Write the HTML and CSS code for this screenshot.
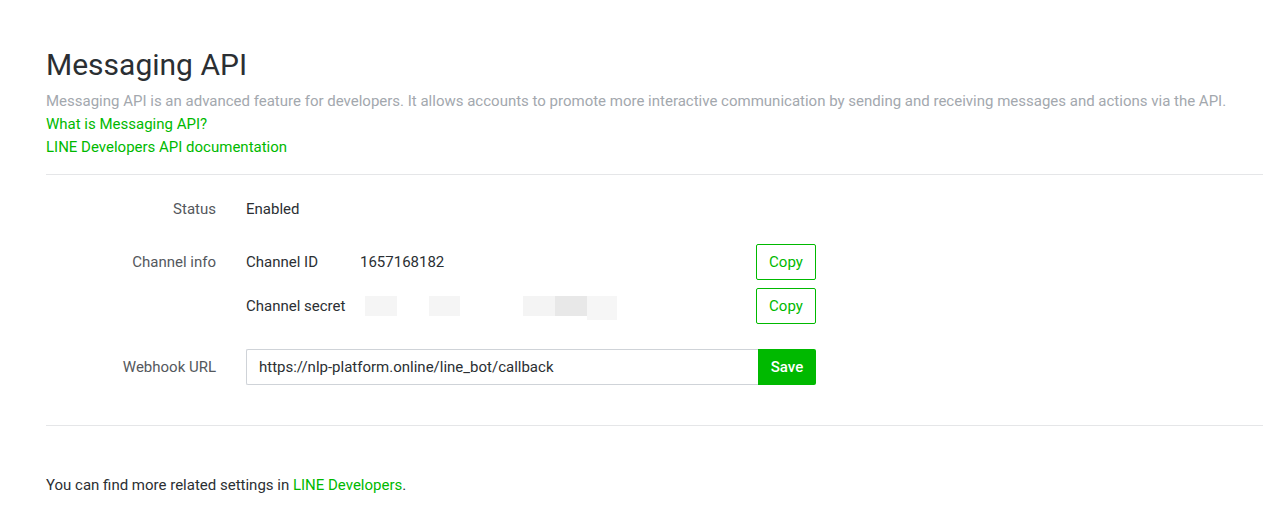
FILE: index.html
```html
<!DOCTYPE html>
<html lang="en">
<head>
<meta charset="utf-8">
<link rel="stylesheet" href="styles.css">
</head>
<body>
<main class="page">
  <section class="intro">
    <h1 class="title">Messaging API</h1>
    <p class="desc">Messaging API is an advanced feature for developers. It allows accounts to promote more interactive communication by sending and receiving messages and actions via the API.</p>
    <a class="link" href="#">What is Messaging API?</a>
    <a class="link" href="#">LINE Developers API documentation</a>
  </section>
  <section class="settings">
    <div class="row row-status">
      <div class="label">Status</div>
      <div class="value">Enabled</div>
    </div>
    <div class="row row-info">
      <div class="label">Channel info</div>
      <div class="value info">
        <div class="info-line">
          <span class="key">Channel ID</span>
          <span class="id">1657168182</span>
          <button class="btn-outline">Copy</button>
        </div>
        <div class="info-line">
          <span class="key">Channel secret</span>
          <span class="secret">
            <i class="blk b1"></i><i class="blk b2"></i><i class="blk b3"></i><i class="blk b4"></i><i class="blk b5"></i>
          </span>
          <button class="btn-outline">Copy</button>
        </div>
      </div>
    </div>
    <div class="row row-webhook">
      <div class="label">Webhook URL</div>
      <div class="value webhook">
        <input class="input" type="text" value="https://nlp-platform.online/line_bot/callback">
        <button class="btn-solid">Save</button>
      </div>
    </div>
  </section>
  <p class="footer">You can find more related settings in <a class="link-inline" href="#">LINE Developers</a>.</p>
</main>
</body>
</html>
```
FILE: styles.css
```css
* { box-sizing: border-box; }
html, body { margin: 0; padding: 0; background: #fff; }
body {
  font-family: Roboto, "Liberation Sans", Arial, sans-serif;
  font-size: 15px;
  color: #2b2f33;
}
.page { padding: 48px 0 0 46px; }
.intro { display: flex; flex-direction: column; padding-bottom: 15px; border-bottom: 1px solid #e5e6e8; }
.title {
  margin: 0;
  font-size: 30px;
  font-weight: 400;
  line-height: 34px;
  color: #2b2f33;
}
.desc {
  margin: 8px 0 0;
  color: #a3a8ae;
  line-height: 23px;
}
.link {
  color: #00b900;
  text-decoration: none;
  line-height: 23px;
  align-self: flex-start;
}
.settings {
  padding: 25px 0 40px;
  border-bottom: 1px solid #e5e6e8;
}
.row { display: flex; align-items: flex-start; }
.label {
  width: 170px;
  text-align: right;
  color: #54585d;
  flex: none;
}
.value { margin-left: 30px; color: #2b2f33; }
.row-status { height: 44px; }
.row-status .label, .row-status .value { line-height: 18px; }
.row-info .label { line-height: 36px; }
.info { display: flex; flex-direction: column; gap: 8px; }
.info-line { display: flex; align-items: center; height: 36px; }
.key { width: 114px; }
.id { width: 396px; }
.secret { width: 396px; display: flex; height: 20px; position: relative; }
.blk { display: block; height: 20px; position: absolute; top: 0; }
.b1 { left: 5px; width: 32px; background: #f5f5f5; }
.b2 { left: 69px; width: 31px; background: #f5f5f5; }
.b3 { left: 163px; width: 32px; background: #f4f4f4; }
.b4 { left: 195px; width: 32px; background: #e8e8e8; }
.b5 { left: 227px; width: 30px; height: 24px; background: #f6f6f6; }
.btn-outline {
  width: 60px;
  height: 36px;
  border: 1px solid #00b900;
  border-radius: 2px;
  background: #fff;
  color: #00b900;
  font: 400 15px Roboto, "Liberation Sans", Arial, sans-serif;
  padding: 0;
}
.row-webhook { margin-top: 25px; }
.row-webhook .label { line-height: 36px; }
.webhook { display: flex; }
.input {
  width: 512px;
  height: 36px;
  border: 1px solid #cfd3d8;
  border-right: none;
  border-radius: 2px 0 0 2px;
  padding: 0 12px;
  font: 400 15px Roboto, "Liberation Sans", Arial, sans-serif;
  color: #2b2f33;
  outline: none;
}
.btn-solid {
  width: 58px;
  height: 36px;
  border: none;
  border-radius: 0 2px 2px 0;
  background: #00b900;
  color: #fff;
  font: 500 15px Roboto, "Liberation Sans", Arial, sans-serif;
  padding: 0;
}
.footer { margin: 49px 0 0; line-height: 20px; color: #2b2f33; }
.link-inline { color: #00b900; text-decoration: none; }
```
